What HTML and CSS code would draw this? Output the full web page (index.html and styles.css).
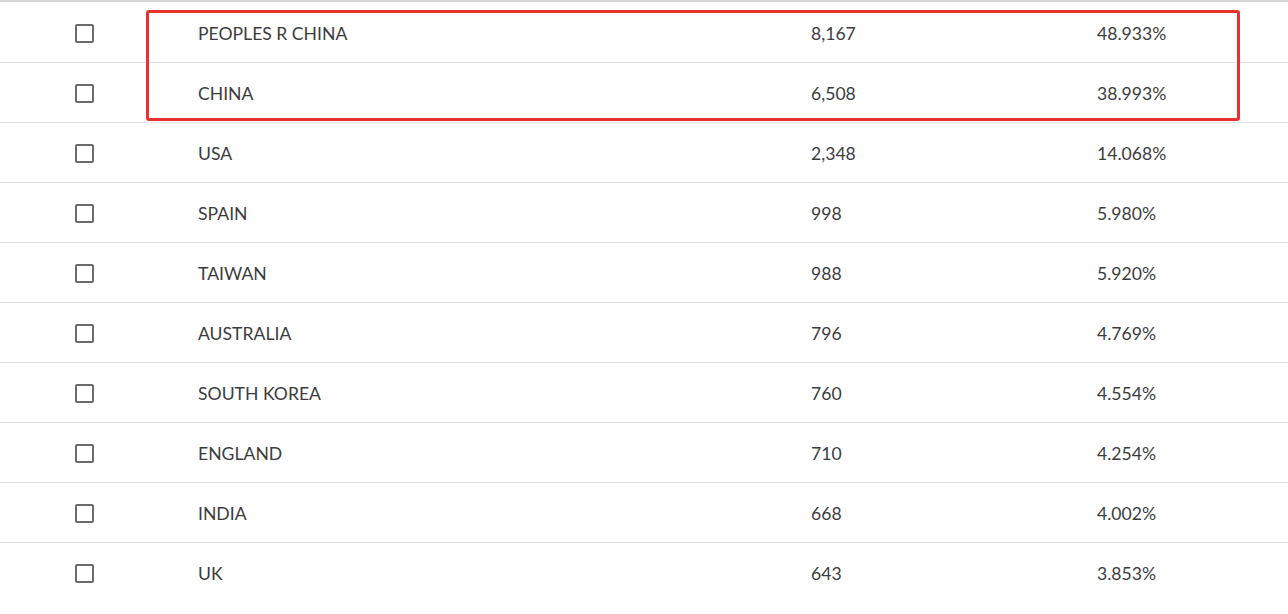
FILE: index.html
```html
<!DOCTYPE html>
<html>
<head>
<meta charset="utf-8">
<link rel="stylesheet" href="styles.css">
</head>
<body>
<div class="table">
  <div class="highlight"></div>
  <div class="row"><span class="cell check"><span class="box"></span></span><span class="cell name">PEOPLES R CHINA</span><span class="cell count">8,167</span><span class="cell pct">48.933%</span></div>
  <div class="row"><span class="cell check"><span class="box"></span></span><span class="cell name">CHINA</span><span class="cell count">6,508</span><span class="cell pct">38.993%</span></div>
  <div class="row"><span class="cell check"><span class="box"></span></span><span class="cell name">USA</span><span class="cell count">2,348</span><span class="cell pct">14.068%</span></div>
  <div class="row"><span class="cell check"><span class="box"></span></span><span class="cell name">SPAIN</span><span class="cell count">998</span><span class="cell pct">5.980%</span></div>
  <div class="row"><span class="cell check"><span class="box"></span></span><span class="cell name">TAIWAN</span><span class="cell count">988</span><span class="cell pct">5.920%</span></div>
  <div class="row"><span class="cell check"><span class="box"></span></span><span class="cell name">AUSTRALIA</span><span class="cell count">796</span><span class="cell pct">4.769%</span></div>
  <div class="row"><span class="cell check"><span class="box"></span></span><span class="cell name">SOUTH KOREA</span><span class="cell count">760</span><span class="cell pct">4.554%</span></div>
  <div class="row"><span class="cell check"><span class="box"></span></span><span class="cell name">ENGLAND</span><span class="cell count">710</span><span class="cell pct">4.254%</span></div>
  <div class="row"><span class="cell check"><span class="box"></span></span><span class="cell name">INDIA</span><span class="cell count">668</span><span class="cell pct">4.002%</span></div>
  <div class="row last"><span class="cell check"><span class="box"></span></span><span class="cell name">UK</span><span class="cell count">643</span><span class="cell pct">3.853%</span></div>
</div>
</body>
</html>
```

FILE: styles.css
```css
html, body {
  margin: 0;
  padding: 0;
  background: #ffffff;
}
body {
  font-family: Lato, "Noto Sans", sans-serif;
  font-size: 17.6px;
  color: #3c3c3e;
}
.table {
  position: relative;
  border-top: 2px solid #d6d6d6;
  padding-top: 1px;
}
.row {
  display: grid;
  grid-template-columns: 198px 613px 286px 1fr;
  height: 59px;
  align-items: center;
  border-bottom: 1px solid #e2e2e2;
}
.row.last {
  border-bottom: none;
}
.cell {
  padding-top: 2px;
}
.check {
  padding-left: 75px;
  padding-top: 1px;
  display: flex;
  align-items: center;
}
.box {
  width: 15px;
  height: 15px;
  border: 2px solid #6b6b6b;
  border-radius: 2px;
  box-sizing: content-box;
}
.highlight {
  position: absolute;
  left: 146px;
  top: 8px;
  width: 1088px;
  height: 105px;
  border: 3px solid #e8322e;
  border-radius: 3px;
  pointer-events: none;
}
```
